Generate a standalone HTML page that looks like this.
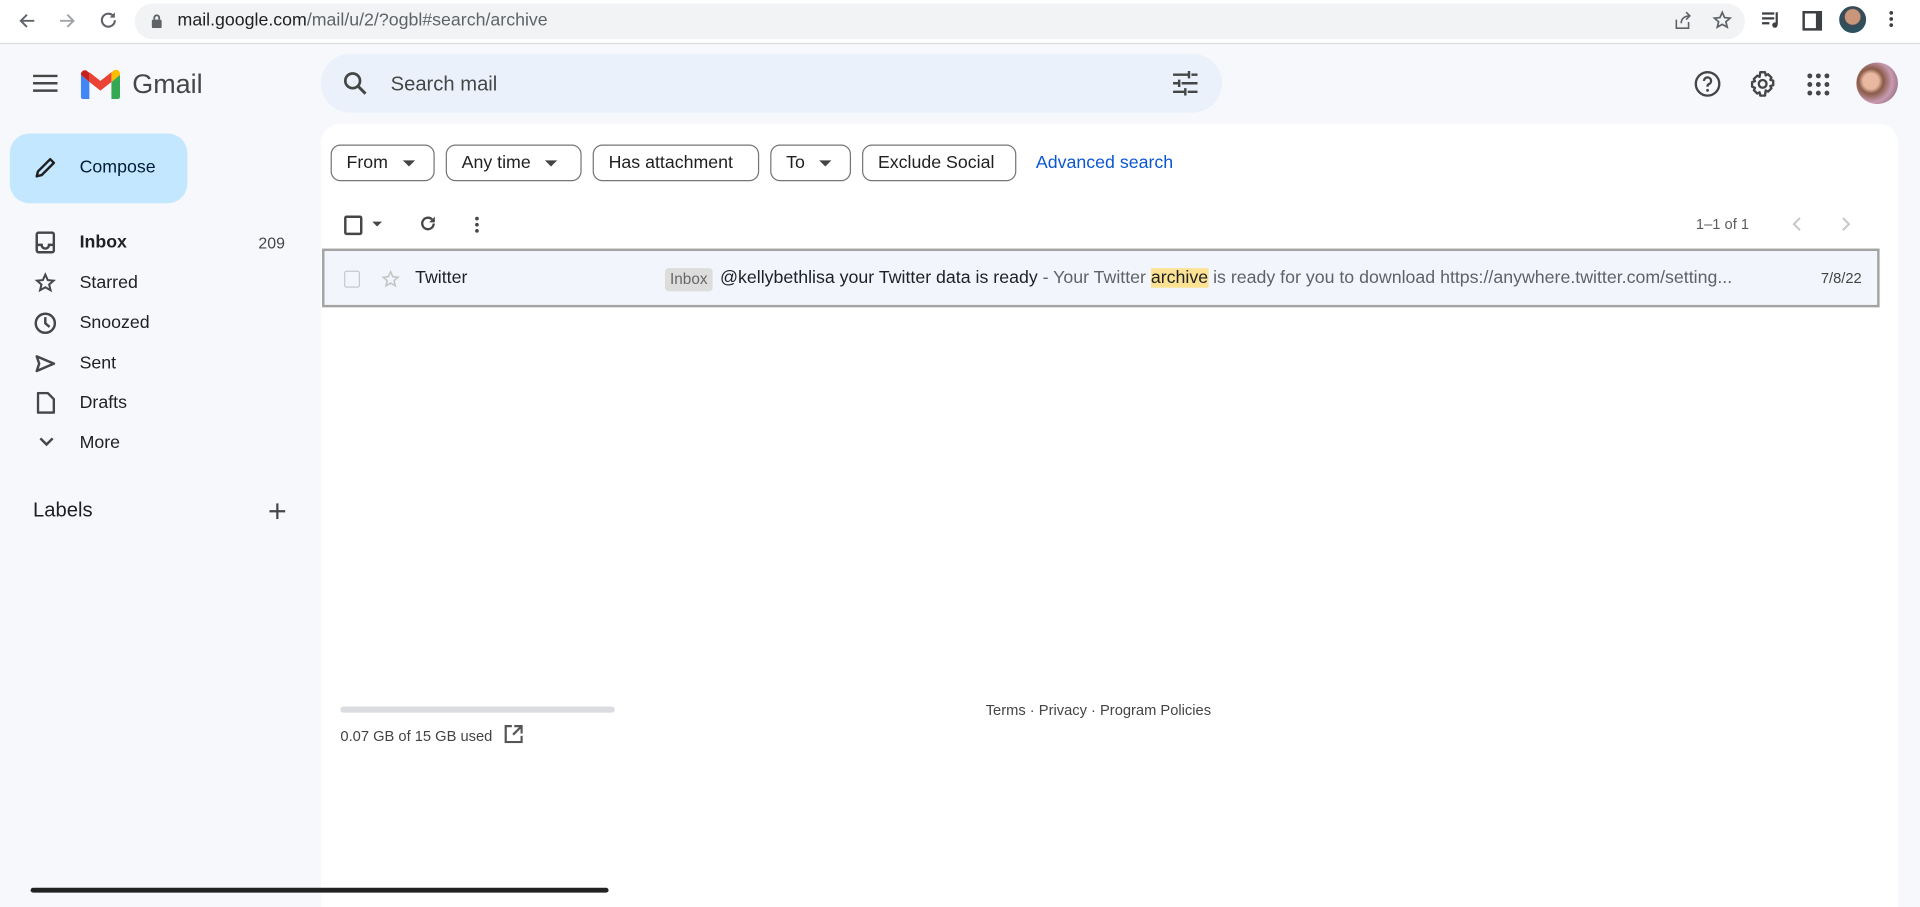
<!DOCTYPE html>
<html><head><meta charset="utf-8">
<style>
html,body{margin:0;padding:0;width:1920px;height:892px;overflow:hidden;background:#f6f8fc;}
#w{position:absolute;left:0;top:0;width:1568px;height:729px;transform:scale(1.22449);transform-origin:0 0;font-family:"Liberation Sans",Arial,sans-serif;color:#202124;background:#f6f8fc;}
.a{position:absolute;}
svg{display:block}
.chip{position:absolute;top:118px;height:30px;border:1px solid #747775;border-radius:8px;font-size:14.5px;color:#1f1f1f;display:flex;align-items:center;padding:0 12px;box-sizing:border-box;}
.chip .dd{width:0;height:0;border-left:5px solid transparent;border-right:5px solid transparent;border-top:5px solid #444;margin-left:12px}
.nav{position:absolute;left:65px;font-size:14.5px;color:#202124}
.ic{position:absolute;left:28px}
</style></head><body><div id="w">
<!-- chrome bar -->
<div class="a" style="left:0;top:0;width:1568px;height:35px;background:#fff;border-bottom:1px solid #dadce0"></div>
<svg class="a" style="left:14px;top:9px" width="16" height="16" viewBox="0 0 16 16"><path d="M14 8H3M8 3L3 8l5 5" stroke="#5f6368" stroke-width="1.6" fill="none"/></svg>
<svg class="a" style="left:47px;top:9px" width="16" height="16" viewBox="0 0 16 16"><path d="M2 8h11M8 3l5 5-5 5" stroke="#a0a4a8" stroke-width="1.6" fill="none"/></svg>
<svg class="a" style="left:80px;top:8px" width="17" height="17" viewBox="0 0 16 16"><path d="M13 8a5 5 0 1 1-1.5-3.6" stroke="#5f6368" stroke-width="1.6" fill="none"/><path d="M13 2v4H9z" fill="#5f6368"/></svg>
<div class="a" style="left:110px;top:3px;width:1315px;height:29px;background:#f1f3f4;border-radius:15px"></div>
<svg class="a" style="left:123px;top:11px" width="10" height="12" viewBox="0 0 10 12"><rect x="1" y="5" width="8" height="7" rx="1" fill="#5f6368"/><path d="M3 5V3.5a2 2 0 0 1 4 0V5" stroke="#5f6368" stroke-width="1.5" fill="none"/></svg>
<div class="a" style="left:145px;top:9px;font-size:14.5px;color:#202124">mail.google.com<span style="color:#5f6368">/mail/u/2/?ogbl#search/archive</span></div>
<svg class="a" style="left:1366px;top:9px" width="16" height="16" viewBox="0 0 16 16"><path d="M3 7v7h10V9M7 10c0-4 3-6 7-6M11 1l3 3-3 3" stroke="#5f6368" stroke-width="1.3" fill="none"/></svg>
<svg class="a" style="left:1398px;top:8px" width="17" height="17" viewBox="0 0 24 24"><path d="M12 3l2.7 6 6.3.6-4.8 4.2 1.5 6.2L12 16.8 6.3 20l1.5-6.2L3 9.6l6.3-.6z" stroke="#5f6368" stroke-width="2" fill="none"/></svg>
<svg class="a" style="left:1438px;top:9px" width="17" height="15" viewBox="0 0 17 15"><path d="M1 2h10M1 6h10M1 10h6M13 1v10" stroke="#3c4043" stroke-width="1.8"/><circle cx="11.5" cy="11.5" r="2.2" fill="#3c4043"/></svg>
<div class="a" style="left:1472px;top:9px;width:9px;height:12px;border:2px solid #3c4043;border-right-width:5px"></div>
<div class="a" style="left:1502px;top:5px;width:22px;height:22px;border-radius:50%;background:radial-gradient(circle at 50% 40%,#c9967a 0 35%,#3a4a55 40%,#1d5a6a 100%)"></div>
<div class="a" style="left:1543px;top:9px;width:3px;height:3px;background:#3c4043;border-radius:50%;box-shadow:0 5px #3c4043,0 10px #3c4043"></div>

<!-- header -->
<svg class="a" style="left:27px;top:60px" width="20" height="16" viewBox="0 0 20 16"><path d="M0 2h20M0 8h20M0 14h20" stroke="#444746" stroke-width="2"/></svg>
<svg class="a" style="left:66px;top:57px" width="32" height="24" viewBox="0 0 32 24"><path d="M2 24V5l14 10L30 5v19" fill="none"/><path d="M0 4v18a2 2 0 0 0 2 2h5V10z" fill="#4285f4"/><path d="M32 4v18a2 2 0 0 1-2 2h-5V10z" fill="#34a853"/><path d="M25 10V2l2-1.5c2-1.5 5 0 5 3V4z" fill="#fbbc04"/><path d="M7 10V2l9 7 9-7v8l-9 7z" fill="#ea4335"/><path d="M0 4c0-3 3-4.5 5-3l2 1.5V10L0 4z" fill="#c5221f"/></svg>
<div class="a" style="left:108px;top:56px;font-size:22px;color:#444746">Gmail</div>
<div class="a" style="left:262px;top:44px;width:736px;height:48px;background:#eaf1fb;border-radius:24px"></div>
<svg class="a" style="left:280px;top:58px" width="20" height="20" viewBox="0 0 20 20"><circle cx="8" cy="8" r="6" stroke="#444746" stroke-width="2.2" fill="none"/><path d="M12.5 12.5l6 6" stroke="#444746" stroke-width="2.4"/></svg>
<div class="a" style="left:319px;top:60px;font-size:16.5px;color:#444746">Search mail</div>
<svg class="a" style="left:958px;top:58px" width="20" height="20" viewBox="0 0 20 20"><path d="M0 3h12M15 3h5M13 0v6M0 10h4M7 10h13M5 7v6M0 17h9M12 17h8M10 14v6" stroke="#444746" stroke-width="2"/></svg>
<svg class="a" style="left:1383px;top:57px" width="23" height="23" viewBox="0 0 24 24"><circle cx="12" cy="12" r="10" stroke="#444746" stroke-width="2" fill="none"/><path d="M9 9.5a3 3 0 1 1 4 2.8c-1 .5-1 1-1 2.2" stroke="#444746" stroke-width="2" fill="none"/><circle cx="12" cy="17.5" r="1.2" fill="#444746"/></svg>
<svg class="a" style="left:1428px;top:57px" width="23" height="23" viewBox="0 0 24 24"><circle cx="12" cy="12" r="3.3" stroke="#444746" stroke-width="2" fill="none"/><path d="M10 2h4l.6 2.8 2-1 2.9 2.8-1 2 2.5.6v4l-2.5.6 1 2-2.9 2.8-2-1L14 22h-4l-.6-2.8-2 1-2.9-2.8 1-2L3 14.4v-4l2.5-.6-1-2 2.9-2.8 2 1z" stroke="#444746" stroke-width="2" fill="none" stroke-linejoin="round"/></svg>
<svg class="a" style="left:1476px;top:60px" width="18" height="18" viewBox="0 0 18 18" fill="#444746"><circle cx="2" cy="2" r="2"/><circle cx="9" cy="2" r="2"/><circle cx="16" cy="2" r="2"/><circle cx="2" cy="9" r="2"/><circle cx="9" cy="9" r="2"/><circle cx="16" cy="9" r="2"/><circle cx="2" cy="16" r="2"/><circle cx="9" cy="16" r="2"/><circle cx="16" cy="16" r="2"/></svg>
<div class="a" style="left:1516px;top:51px;width:34px;height:34px;border-radius:50%;background:radial-gradient(circle at 35% 45%,#e8b9a0 0 22%,#8a5a48 35%,#c79ab0 60%,#6d4d5e 100%)"></div>

<!-- compose -->
<div class="a" style="left:8px;top:109px;width:145px;height:57px;background:#c2e7ff;border-radius:16px"></div>
<svg class="a" style="left:28px;top:128px" width="18" height="18" viewBox="0 0 18 18"><path d="M2 16l1-4L13 2l3 3L6 15z" stroke="#1f1f1f" stroke-width="2" fill="none" stroke-linejoin="round"/></svg>
<div class="a" style="left:65px;top:129px;font-size:14.5px;color:#001d35">Compose</div>

<!-- nav -->
<svg class="ic" style="top:189px;left:29px" width="16" height="18" viewBox="0 0 16 18"><rect x="1" y="1" width="14" height="16" rx="1.5" stroke="#444746" stroke-width="2" fill="none"/><path d="M1 11h4a3 3 0 0 0 6 0h4" stroke="#444746" stroke-width="2" fill="none"/></svg>
<div class="nav" style="top:190px;font-weight:bold">Inbox</div>
<div class="a" style="left:211px;top:191px;font-size:13px;color:#444746">209</div>
<svg class="ic" style="top:222px" width="18" height="18" viewBox="0 0 24 24"><path d="M12 3l2.7 6 6.3.6-4.8 4.2 1.5 6.2L12 16.8 6.3 20l1.5-6.2L3 9.6l6.3-.6z" stroke="#444746" stroke-width="2.2" fill="none"/></svg>
<div class="nav" style="top:223px">Starred</div>
<svg class="ic" style="top:255px" width="18" height="18" viewBox="0 0 18 18"><circle cx="9" cy="9" r="7.8" stroke="#444746" stroke-width="2" fill="none"/><path d="M9 4v5l3.5 3" stroke="#444746" stroke-width="2" fill="none"/></svg>
<div class="nav" style="top:256px">Snoozed</div>
<svg class="ic" style="top:289px" width="18" height="16" viewBox="0 0 18 16"><path d="M2 2l14 6-14 6 2-6z" stroke="#444746" stroke-width="2" fill="none" stroke-linejoin="round"/></svg>
<div class="nav" style="top:289px">Sent</div>
<svg class="ic" style="top:320px;left:30px" width="15" height="18" viewBox="0 0 15 18"><path d="M1 1h8l5 5v11H1z" stroke="#444746" stroke-width="2" fill="none" stroke-linejoin="round"/></svg>
<div class="nav" style="top:321px">Drafts</div>
<svg class="ic" style="top:357px;left:32px" width="12" height="8" viewBox="0 0 12 8"><path d="M1 1l5 5 5-5" stroke="#444746" stroke-width="2" fill="none"/></svg>
<div class="nav" style="top:354px">More</div>
<div class="a" style="left:27px;top:408px;font-size:16.5px;color:#1f1f1f">Labels</div>
<svg class="a" style="left:220px;top:411px" width="13" height="13" viewBox="0 0 13 13"><path d="M6.5 0v13M0 6.5h13" stroke="#444746" stroke-width="1.8"/></svg>

<!-- main -->
<div class="a" style="left:262px;top:101px;width:1288px;height:640px;background:#fff;border-radius:16px 16px 0 0"></div>
<div class="chip" style="left:270px;width:85px">From<span class="dd"></span></div>
<div class="chip" style="left:364px;width:111px">Any time<span class="dd"></span></div>
<div class="chip" style="left:484px;width:136px">Has attachment</div>
<div class="chip" style="left:629px;width:66px">To<span class="dd"></span></div>
<div class="chip" style="left:704px;width:126px">Exclude Social</div>
<div class="a" style="left:846px;top:125px;font-size:14.5px;color:#0b57d0">Advanced search</div>

<div class="a" style="left:281px;top:176px;width:11px;height:12px;border:2px solid #444746;border-radius:2px"></div>
<div class="a" style="left:304px;top:181px;border-left:4px solid transparent;border-right:4px solid transparent;border-top:4px solid #444746"></div>
<svg class="a" style="left:342px;top:175px" width="15" height="15" viewBox="0 0 16 16"><path d="M13 8a5 5 0 1 1-1.5-3.6" stroke="#444746" stroke-width="2" fill="none"/><path d="M14 2v5H9z" fill="#444746"/></svg>
<div class="a" style="left:388px;top:177px;width:3px;height:3px;background:#444746;border-radius:50%;box-shadow:0 5px #444746,0 10px #444746"></div>
<div class="a" style="left:1385px;top:176px;font-size:12px;color:#5e5e5e">1–1 of 1</div>
<svg class="a" style="left:1463px;top:177px" width="8" height="12" viewBox="0 0 8 12"><path d="M7 1L2 6l5 5" stroke="#c4c7c5" stroke-width="1.6" fill="none"/></svg>
<svg class="a" style="left:1504px;top:177px" width="8" height="12" viewBox="0 0 8 12"><path d="M1 1l5 5-5 5" stroke="#c4c7c5" stroke-width="1.6" fill="none"/></svg>

<div class="a" style="left:263px;top:203px;width:1268px;height:44px;border:2px solid #a3a3a3;background:#f2f6fc"></div>
<div class="a" style="left:281px;top:221px;width:11px;height:12px;border:1.5px solid #c8c8c8;border-radius:2px"></div>
<svg class="a" style="left:311px;top:220px" width="16" height="16" viewBox="0 0 24 24"><path d="M12 3l2.7 6 6.3.6-4.8 4.2 1.5 6.2L12 16.8 6.3 20l1.5-6.2L3 9.6l6.3-.6z" stroke="#c4c7c5" stroke-width="2" fill="none"/></svg>
<div class="a" style="left:339px;top:219px;font-size:14.5px;color:#202124">Twitter</div>
<div class="a" style="left:543px;top:219px;width:39px;height:19px;background:#ddd;border-radius:3px;font-size:12.5px;color:#666;text-align:center;line-height:19px">Inbox</div>
<div class="a" style="left:588px;top:219px;font-size:14.5px;color:#202124;white-space:nowrap">@kellybethlisa your Twitter data is ready <span style="color:#5f6368">- Your Twitter <span style="background:#fde293;color:#202124">archive</span> is ready for you to download https://anywhere.twitter.com/setting...</span></div>
<div class="a" style="left:1487px;top:220px;font-size:12px;color:#444">7/8/22</div>

<div class="a" style="left:278px;top:577px;width:224px;height:5px;background:#dadce0;border-radius:3px"></div>
<div class="a" style="left:278px;top:594px;font-size:12px;color:#444">0.07 GB of 15 GB used</div>
<svg class="a" style="left:412px;top:592px" width="15" height="15" viewBox="0 0 15 15"><path d="M6 1H1v13h13V9M8 1h6v6M14 1L7 8" stroke="#555" stroke-width="1.8" fill="none"/></svg>
<div class="a" style="left:805px;top:573px;font-size:12px;color:#444">Terms · Privacy · Program Policies</div>
<div class="a" style="left:25px;top:725px;width:472px;height:4px;background:#222;border-radius:2px"></div>
</div></body></html>
